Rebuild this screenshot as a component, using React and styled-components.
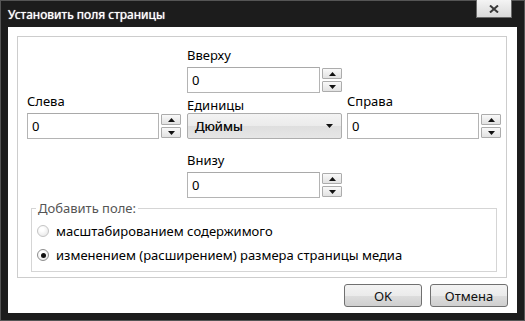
import styled, { createGlobalStyle } from "styled-components";

const GlobalStyle = createGlobalStyle`
  html, body {
    margin: 0;
    padding: 0;
    background: #ffffff;
  }

  body {
    font-family: "Noto Sans", "Open Sans", sans-serif;
    font-size: 13px;
    color: #000;
  }
`;

const Window = styled.div`
  width: 525px;
  height: 321px;
  box-sizing: border-box;
  display: flex;
  flex-direction: column;

  background: #1c1c1c;
  border: 1px solid #555;
`;

const TitleBar = styled.div`
  height: 26px;
  flex-shrink: 0;
  display: flex;
  align-items: flex-start;
  justify-content: space-between;
  padding: 0 12px 0 7px;
`;

const Title = styled.div`
  margin-top: 6px;
  color: #fff;
  font-size: 12px;
  line-height: 16px;
  text-shadow: 0 0 1px #fff;
`;

const CloseButton = styled.button`
  width: 36px;
  height: 18px;
  margin-top: -1px;
  padding: 0;
  display: flex;
  align-items: center;
  justify-content: center;

  background: linear-gradient(#f4f4f4, #d9d9d9);
  border: 1px solid #6a6a6a;
  border-top: none;
`;

const Client = styled.div`
  flex: 1;
  min-height: 0;
  margin: 0 7px 7px 7px;
  display: flex;
  flex-direction: column;

  background: #fff;
`;

const Panel = styled.div`
  margin: 9px 10px 0 9px;
  padding: 10px 0 5px 0;
  display: flex;
  flex-direction: column;

  border: 1px solid #cdcdcd;
`;

const Grid = styled.div`
  display: grid;
  grid-template-columns: 160px 160px 155px;
  grid-template-rows: auto auto auto;
  padding-left: 9px;
`;

const Field = styled.div`
  grid-column: ${(p) => p.$col};
  grid-row: ${(p) => p.$row};
  display: flex;
  flex-direction: column;
  padding-top: ${(p) => p.$offset || 0}px;
  margin-top: ${(p) => p.$pull || 0}px;
`;

const Label = styled.div`
  height: 16px;
  line-height: 16px;
  margin-bottom: ${(p) => (p.$tight ? 0 : 4)}px;
`;

const SpinRow = styled.div`
  display: flex;
  align-items: center;
  gap: 2px;
`;

const Input = styled.div`
  width: ${(p) => p.$width}px;
  height: 26px;
  box-sizing: border-box;
  padding-left: 4px;
  display: flex;
  align-items: center;

  border: 1px solid #b4b4b4;
  border-top-color: #a9a9a9;
  background: #fff;
  font-size: 13px;
`;

const Spinner = styled.div`
  width: 20px;
  display: flex;
  flex-direction: column;
  gap: 2px;
`;

const SpinButton = styled.div`
  height: 11px;
  box-sizing: border-box;
  display: flex;
  align-items: center;
  justify-content: center;

  border: 1px solid #acacac;
  border-radius: 1px;
  background: linear-gradient(#f9f9f9, #e2e2e2);
`;

const Select = styled.div`
  width: 155px;
  height: 26px;
  box-sizing: border-box;
  padding: 0 8px 0 7px;
  display: flex;
  align-items: center;
  justify-content: space-between;

  border: 1px solid #adadad;
  border-radius: 2px;
  background: linear-gradient(#f3f3f3 0%, #ebebeb 50%, #dedede 51%, #e6e6e6 100%);
  color: #111;
  text-shadow: 0 0 0.5px #333;
`;

const GroupBox = styled.fieldset`
  margin: 2px 9px 0 13px;
  padding: 3px 0 4px 0;
  border: 1px solid #d5d5d5;
`;

const Legend = styled.legend`
  margin-left: 4px;
  padding: 0 2px;
  line-height: 16px;
  color: #555;
`;

const RadioRow = styled.label`
  height: 24px;
  display: flex;
  align-items: center;
  gap: 7px;
  padding-left: 5px;
`;

const Radio = styled.span`
  width: 12px;
  height: 12px;
  box-sizing: border-box;
  display: flex;
  align-items: center;
  justify-content: center;

  border-radius: 50%;
  border: 1px solid ${(p) => (p.$checked ? "#8e8e8e" : "#c4c4c4")};
  background: radial-gradient(circle at 40% 35%, #ffffff 20%, #e2e2e2 100%);

  &::after {
    content: "";
    display: ${(p) => (p.$checked ? "block" : "none")};
    width: 5px;
    height: 5px;
    border-radius: 50%;
    background: #111;
  }
`;

const Footer = styled.div`
  display: flex;
  justify-content: flex-end;
  gap: 8px;
  padding: 6px 9px 0 0;
`;

const Button = styled.button`
  width: 78px;
  height: 23px;
  padding: 0;

  font-family: inherit;
  font-size: 13px;
  color: #111;
  border: 1px solid #707070;
  border-radius: 3px;
  background: linear-gradient(#f3f3f3 0%, #ebebeb 50%, #dddddd 51%, #cfcfcf 100%);
`;

function Arrow({ down }) {
  return (
    <svg width="7" height="4" viewBox="0 0 7 4">
      <path d={down ? "M0 0H7L3.5 4Z" : "M0 4H7L3.5 0Z"} fill="#111" />
    </svg>
  );
}

function NumberField({ col, row, label, width, pull }) {
  return (
    <Field $col={col} $row={row} $pull={pull}>
      <Label>{label}</Label>
      <SpinRow>
        <Input $width={width}>0</Input>
        <Spinner>
          <SpinButton>
            <Arrow />
          </SpinButton>
          <SpinButton>
            <Arrow down />
          </SpinButton>
        </Spinner>
      </SpinRow>
    </Field>
  );
}

export default function App() {
  return (
    <>
      <GlobalStyle />
      <Window>
        <TitleBar>
          <Title>Установить поля страницы</Title>
          <CloseButton aria-label="Закрыть">
            <svg width="10" height="8" viewBox="0 0 10 8">
              <path d="M1 0.5L9 7.5M9 0.5L1 7.5" stroke="#3a3a3a" strokeWidth="2" />
            </svg>
          </CloseButton>
        </TitleBar>

        <Client>
          <Panel>
            <Grid>
              <NumberField col={2} row={1} label="Вверху" width={133} />
              <NumberField col={1} row={2} label="Слева" width={132} />
              <Field $col={2} $row={2} $offset={4}>
                <Label $tight>Единицы</Label>
                <Select>
                  <span>Дюймы</span>
                  <Arrow down />
                </Select>
              </Field>
              <NumberField col={3} row={2} label="Справа" width={132} />
              <NumberField col={2} row={3} label="Внизу" width={133} pull={13} />
            </Grid>

            <GroupBox>
              <Legend>Добавить поле:</Legend>
              <RadioRow>
                <Radio />
                масштабированием содержимого
              </RadioRow>
              <RadioRow>
                <Radio $checked />
                изменением (расширением) размера страницы медиа
              </RadioRow>
            </GroupBox>
          </Panel>

          <Footer>
            <Button>OK</Button>
            <Button>Отмена</Button>
          </Footer>
        </Client>
      </Window>
    </>
  );
}
